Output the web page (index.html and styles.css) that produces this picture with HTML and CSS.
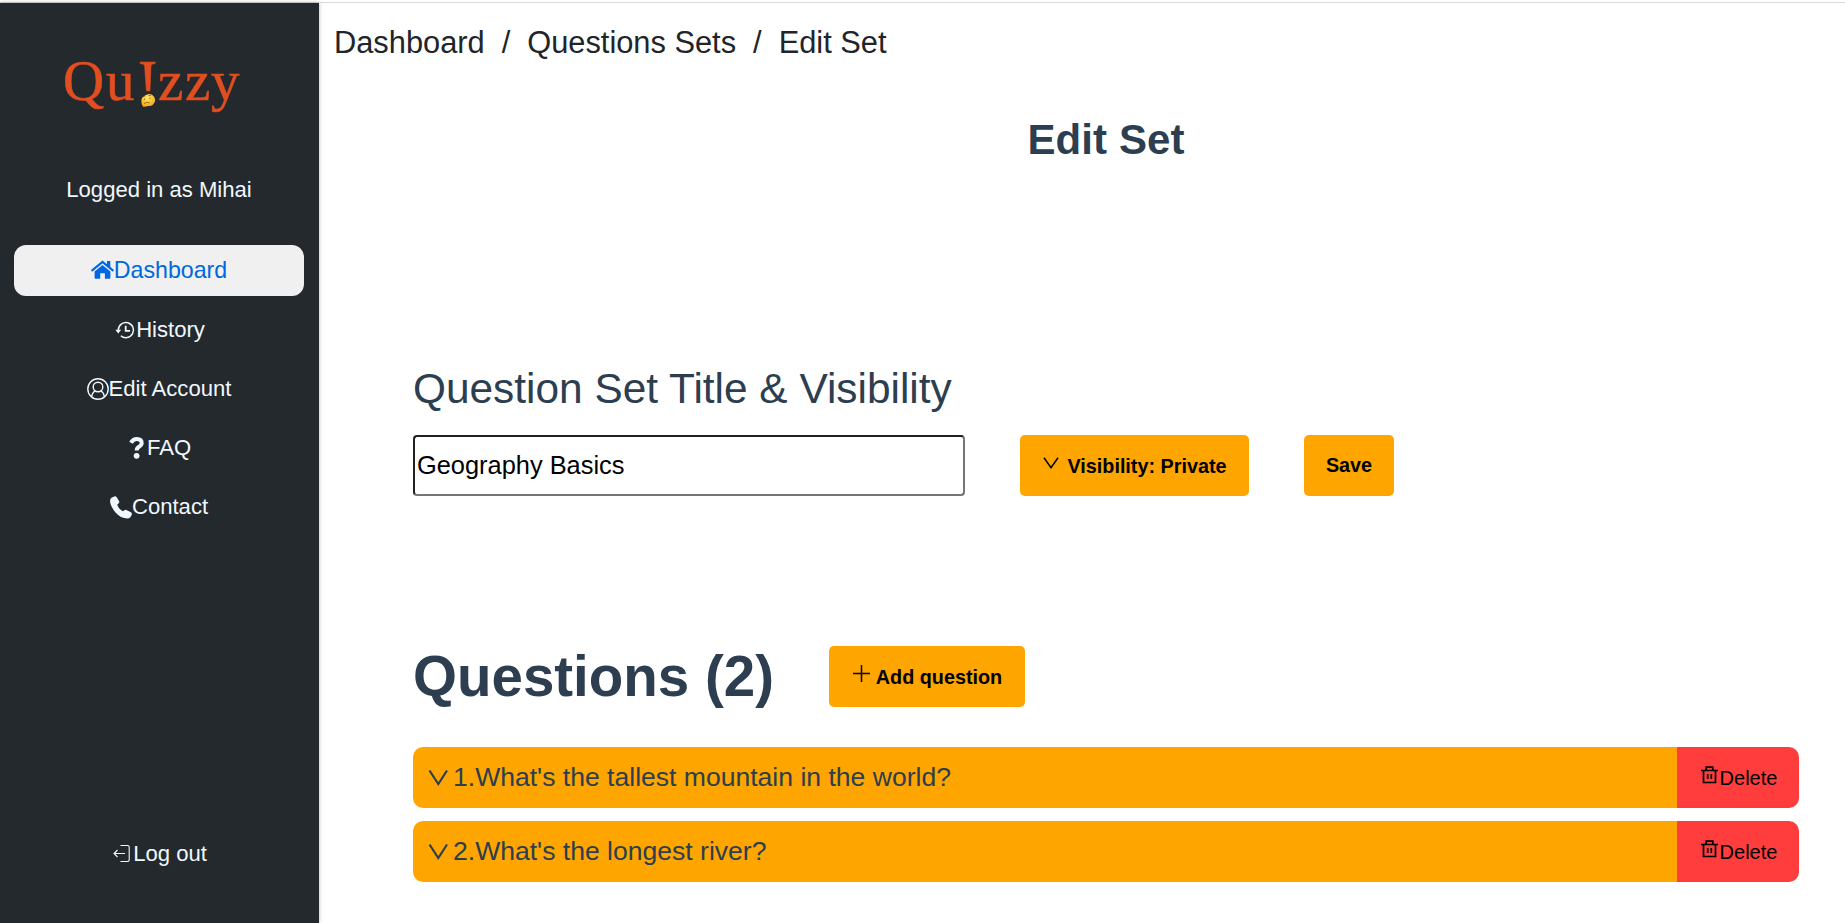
FILE: index.html
```html
<!DOCTYPE html>
<html lang="en">
<head>
<meta charset="utf-8">
<title>Quizzy - Edit Set</title>
<link rel="stylesheet" href="styles.css">
</head>
<body>
<div class="app">
  <aside class="sidebar">
    <svg class="logo" viewBox="0 0 190 66" width="190" height="66">
      <defs>
        <radialGradient id="face" cx=".45" cy=".3" r=".7"><stop offset="0" stop-color="#ffe95e"/><stop offset="1" stop-color="#f3a51c"/></radialGradient>
      </defs>
      <g class="logo-text">
        <text y="45" x="7 50">Qu</text>
        <text y="45" x="102 129 155">zzy</text>
      </g>
      <path class="logo-bang" d="M84 7h15.500l-.3 1.500q-4 .2-4.200 2.500L94 36h-3.600L88.600 11q-.4-2.300-4.600-2.500z"/>
      <path d="M91 39.500a6 6 0 1 1 1 11.500q-2 1-5 .8q-1.800-2-1.600-5.300q-.8-4.500 5.600-7z" fill="url(#face)"/>
      <path d="M88.500 43.500v1.600M94 42.500v1.600M86.600 41.500l2.400-.5M92.500 40.300l2.500.3M88 48.500q3-2 5.500-.8" fill="none" stroke="#7a4708" stroke-width=".7"/>
    </svg>
    <p class="user">Logged in as Mihai</p>
    <nav class="menu">
      <a class="item active"><svg class="ic" width="23" height="19" viewBox="0 0 23 19"><path d="M3.600 11.600 11.500 5l7.900 6.600v6.200q0 .9-.9.900h-4.600v-5.500H9.200v5.500H4.500q-.9 0-.9-.9z"/><path d="M1.200 10.400 11.500 1.900l10.300 8.500" fill="none" stroke="currentColor" stroke-width="2.100" stroke-linecap="round"/><path d="M16 1h3.300v7L16 5.200z"/></svg><span>Dashboard</span></a>
      <a class="item nudge"><svg class="ic history" width="20" height="18" viewBox="0 0 20 18"><g fill="none" stroke="currentColor" stroke-width="1.500"><path d="M3.300 9a7.600 7.600 0 1 1 2.500 5.700"/><path d="M10.700 4.800v5h4.300" stroke-width="1.800"/></g><path d="M.4 8.800h5.800L3.200 12.400z"/></svg><span>History</span></a>
      <a class="item"><svg class="ic" width="22" height="22" viewBox="0 0 22 22"><g fill="none" stroke="currentColor" stroke-width="1.400"><circle cx="11" cy="11" r="10.200"/><circle cx="11" cy="9" r="4.800"/><path d="M4.600 18.800q.8-4.800 4-5.900M17.400 18.800q-.8-4.800-4-5.900"/></g></svg><span>Edit Account</span></a>
      <a class="item nudge"><svg class="ic faq" width="16" height="22" viewBox="0 0 16 22"><path d="M2 5.800Q4 2 7.700 2q5 0 5 4 0 2-2.400 3.500-2.600 1.500-2.600 4" fill="none" stroke="currentColor" stroke-width="4"/><circle cx="7.600" cy="18.800" r="2.900"/></svg><span>FAQ</span></a>
      <a class="item"><svg class="ic" width="22" height="23" viewBox="0 0 22 23"><path d="M1.500 1.700 4.200.4q1.600-.6 2.500.9L9 5q.8 1.500-.5 2.600L7.200 8.800q1.300 3.900 5.700 6.500l1.500-1q1.200-.8 2.500-.1l4 2.100q1.400.8.9 2.300-1.300 4-4.300 4-7-.5-12-6.200Q-.2 9.800.1 4.300.3 2.400 1.500 1.700z"/></svg><span>Contact</span></a>
    </nav>
    <a class="item logout nudge"><svg class="ic" width="18" height="19" viewBox="0 0 18 19"><path d="M7.500 1.500h7q1.700 0 1.700 1.700v12.600q0 1.700-1.700 1.700h-7M1 9.500h11M4.500 6 1 9.500 4.500 13" fill="none" stroke="currentColor" stroke-width="1.100"/></svg><span>Log out</span></a>
  </aside>
  <main class="main">
    <div class="crumbs"><span>Dashboard</span><span class="sep">/</span><span>Questions Sets</span><span class="sep">/</span><span>Edit Set</span></div>
    <h1 class="title">Edit Set</h1>
    <div class="content">
      <h2 class="label">Question Set Title &amp; Visibility</h2>
      <div class="form">
        <input class="field" type="text" value="Geography Basics">
        <button class="btn visibility"><svg class="chev" width="16" height="12" viewBox="0 0 16 12"><path d="M1 .8 8 10.600 15 .8" fill="none" stroke="currentColor" stroke-width="1.500"/></svg><span>Visibility: Private</span></button>
        <button class="btn">Save</button>
      </div>
      <div class="heading">
        <h2 class="count">Questions (2)</h2>
        <button class="btn add"><svg class="plus" width="17" height="17" viewBox="0 0 17 17"><path d="M8.500 0v17M0 8.500h17" fill="none" stroke="currentColor" stroke-width="1.500"/></svg><span>Add question</span></button>
      </div>
      <div class="list">
        <div class="row">
          <div class="question"><svg class="arrow" width="21" height="17" viewBox="0 0 21 17"><path d="M1.500 1.500 10.300 15 19 1.500" fill="none" stroke="currentColor" stroke-width="2.200"/></svg><span>1.What's the tallest mountain in the world?</span></div>
          <button class="delete"><svg class="trash" width="17" height="18" viewBox="0 0 17 18"><path d="M0 4.500h17M5.200 4.500V1.200h6.600v3.300M2.500 4.500v12h12v-12M6.700 8v5M10.300 8v5" fill="none" stroke="currentColor" stroke-width="1.700"/></svg><span>Delete</span></button>
        </div>
        <div class="row">
          <div class="question"><svg class="arrow" width="21" height="17" viewBox="0 0 21 17"><path d="M1.500 1.500 10.300 15 19 1.500" fill="none" stroke="currentColor" stroke-width="2.200"/></svg><span>2.What's the longest river?</span></div>
          <button class="delete"><svg class="trash" width="17" height="18" viewBox="0 0 17 18"><path d="M0 4.500h17M5.200 4.500V1.200h6.600v3.300M2.500 4.500v12h12v-12M6.700 8v5M10.300 8v5" fill="none" stroke="currentColor" stroke-width="1.700"/></svg><span>Delete</span></button>
        </div>
      </div>
    </div>
  </main>
</div>
</body>
</html>
```
FILE: styles.css
```css
* { box-sizing: border-box; }
body {
  margin: 0;
  padding-top: 2px;
  height: 923px;
  overflow: hidden;
  background: #fff;
  color: #2c3e50;
  font-family: "Liberation Sans", Arial, sans-serif;
}
h1, h2, p { margin: 0; font-weight: normal; white-space: nowrap; }
svg { display: block; flex: none; overflow: visible; fill: currentColor; }
.app { display: flex; height: 921px; border-top: 1px solid #dadada; }

.sidebar {
  display: flex;
  flex-direction: column;
  width: 319px;
  flex: none;
  padding: 52px 15px 44px 14px;
  background: #24292d;
  color: #f0f8ff;
  box-shadow: 0 0 4px rgba(0, 0, 0, .3);
}
.logo { margin-left: 42px; }
.logo-text { font: 57px "Liberation Serif", serif; }
.logo-text, .logo-bang { fill: #e14f20; stroke: #d94c20; stroke-width: .6px; }
.user { margin-top: 56px; height: 26px; font-size: 22.100px; line-height: 26px; text-align: center; }
.menu { display: flex; flex-direction: column; gap: 8.200px; margin-top: 42px; }
.item {
  display: flex;
  align-items: center;
  justify-content: center;
  height: 51px;
  font-size: 22.100px;
  line-height: 26px;
  border-radius: 12px;
}
.nudge { padding-left: 2px; }
.active { padding-bottom: 2px; background: #f0f0f0; color: #0068de; font-size: 23.200px; }
.history { margin-right: 1px; }
.faq { margin-right: 2px; }
.logout { margin-top: auto; }
.logout .ic { margin-right: 2px; }

.main { flex: 1; display: flex; flex-direction: column; }
.crumbs { display: flex; padding: 22px 0 0 15px; font-size: 30.800px; line-height: 36px; color: #212529; }
.sep { margin: 0 17px; }
.title { margin: 54px 0 0 48px; text-align: center; font-size: 42px; line-height: 50px; font-weight: bold; letter-spacing: .1px; }
.content { margin-top: 199px; padding: 0 46px 0 94px; }
.label { font-size: 42.400px; line-height: 50px; }
.form { display: flex; gap: 55px; margin-top: 21px; }
.field {
  width: 552px;
  height: 61px;
  padding: 1px 2px;
  border: 2px inset #767676;
  border-radius: 4px;
  background: #fff;
  color: #000;
  font: 25.400px "Liberation Sans", Arial, sans-serif;
}
.btn {
  display: flex;
  align-items: center;
  justify-content: center;
  width: 90px;
  height: 61px;
  padding: 0;
  border: 0;
  border-radius: 5px;
  background: #ffa500;
  color: #000;
  font: bold 19.800px "Liberation Sans", Arial, sans-serif;
}
.visibility { width: 229px; gap: 8px; padding-left: 1px; }
.add { width: 196px; gap: 6px; padding-left: 1px; }
.visibility span, .add span { padding-top: 2px; }
.chev, .plus { margin-bottom: 6px; }
.heading { display: flex; gap: 55px; margin-top: 150px; }
.count { font-size: 56.500px; line-height: 61px; font-weight: bold; width: 361px; }
.list { display: flex; flex-direction: column; gap: 13px; margin-top: 40px; }
.row { display: flex; height: 61px; border-radius: 10px; overflow: hidden; }
.question { display: flex; align-items: center; gap: 4px; flex: 1; padding-left: 15px; background: #ffa500; font-size: 26.550px; }
.delete {
  display: flex;
  align-items: center;
  justify-content: center;
  gap: 2px;
  width: 122px;
  padding: 0 0 0 2px;
  border: 0;
  background: #ff3d3d;
  color: #000;
  font: 20px "Liberation Sans", Arial, sans-serif;
}
.delete span { padding-top: 2px; }
.trash { margin-bottom: 5px; }
```
